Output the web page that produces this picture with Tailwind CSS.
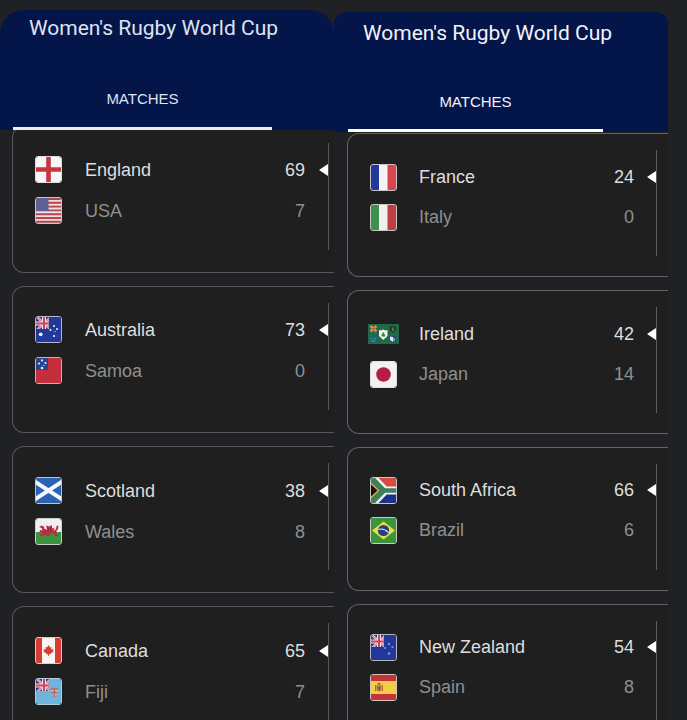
<!DOCTYPE html>
<html lang="en">
<head>
    <meta charset="UTF-8">
    <meta name="viewport" content="width=device-width, initial-scale=1.0">
    <title>Women's Rugby World Cup</title>
    <script src="https://cdn.jsdelivr.net/npm/@tailwindcss/browser@4"></script>
</head>
<body class="bg-[#202124] h-screen overflow-hidden font-['Liberation_Sans',Arial,sans-serif] text-lg text-[#dedede]">

    <!-- Shared flag parts -->
    <svg class="hidden">
        <symbol id="jack" viewBox="0 0 13 12">
            <rect width="13" height="12" fill="#2c3885"/>
            <path d="M8 6.500L0 -1M8 6.500L16 -1M8 6.500L0 14M8 6.500L14 12" stroke="#d9cfe2" stroke-width="2.400"/>
            <path d="M8 6.500L0 -1M8 6.500L16 -1M8 6.500L0 14M8 6.500L14 12" stroke="#c4506c" stroke-width=".8"/>
            <path d="M8 0V12M0 6.500H13" stroke="#eadfe8" stroke-width="4"/>
            <path d="M8 0V12M0 6.500H13" stroke="#cf4258" stroke-width="2"/>
        </symbol>
        <symbol id="arrow" viewBox="0 0 9 12">
            <path d="M0 6L9 0V12Z" fill="currentColor"/>
        </symbol>
    </svg>

    <main class="grid grid-cols-2 pr-[19px] h-full">

        <!-- Left column -->
        <section class="pt-[10px]">
            <header class="relative z-10 h-[120px] flex flex-col justify-between bg-[#041549] rounded-t-3xl text-[#dfe3f0]">
                <h1 class="pt-1 pl-[29px] text-[21px] leading-7 font-['Roboto',sans-serif] whitespace-nowrap">Women's Rugby World Cup</h1>
                <button class="ml-[13px] mr-[62px] pb-[18px] border-b-3 border-[#eceaf2] text-[15px] leading-5">MATCHES</button>
            </header>
            <div class="-mt-1 flex flex-col gap-[13px]">

                <article class="ml-3 h-[147px] pt-4 pl-[22px] pr-[5px] bg-[#1f1f1f] border border-r-0 border-[#58585a] rounded-l-xl">
                    <div class="h-[107px] pt-[6px] border-r border-[#58585a]">
                        <div class="h-[41px] flex items-center">
                            <svg class="size-[27px] rounded-[3px] border border-[#dcdcdc]" viewBox="0 0 25 25">
                                <rect width="25" height="25" fill="#f8f6f6"/>
                                <path d="M12.500 0V25M0 12.500H25" stroke="#c83540" stroke-width="4.600"/>
                            </svg>
                            <span class="ml-[23px] flex-1">England</span>
                            <span>69</span>
                            <svg class="ml-[14px] w-[9px] h-3 text-white"><use href="#arrow"/></svg>
                        </div>
                        <div class="h-[41px] flex items-center text-[#8f8f8f]">
                            <svg class="size-[27px] rounded-[3px] border border-[#cfc3c8]" viewBox="0 0 25 25">
                                <rect width="25" height="25" fill="#e9dfe2"/>
                                <path d="M0 1H25M0 4.800H25M0 8.600H25M0 12.400H25M0 16.200H25M0 20H25M0 23.800H25" stroke="#b8434f" stroke-width="1.900"/>
                                <rect width="12.500" height="13" fill="#5c6094"/>
                            </svg>
                            <span class="ml-[23px] flex-1">USA</span>
                            <span class="mr-[23px]">7</span>
                        </div>
                    </div>
                </article>

                <article class="ml-3 h-[147px] pt-4 pl-[22px] pr-[5px] bg-[#1f1f1f] border border-r-0 border-[#58585a] rounded-l-xl">
                    <div class="h-[107px] pt-[6px] border-r border-[#58585a]">
                        <div class="h-[41px] flex items-center">
                            <svg class="size-[27px] rounded-[3px] border border-[#b4b6c4]" viewBox="0 0 25 25">
                                <rect width="25" height="25" fill="#20399a"/>
                                <use href="#jack" width="13" height="12"/>
                                <g fill="#eef2ff">
                                    <circle cx="4.700" cy="17.300" r="1.900"/>
                                    <circle cx="18" cy="9" r="1"/><circle cx="14.500" cy="13" r="1"/>
                                    <circle cx="21" cy="12" r="1"/><circle cx="18" cy="19" r="1.100"/><circle cx="19" cy="14.500" r=".6"/>
                                </g>
                            </svg>
                            <span class="ml-[23px] flex-1">Australia</span>
                            <span>73</span>
                            <svg class="ml-[14px] w-[9px] h-3 text-white"><use href="#arrow"/></svg>
                        </div>
                        <div class="h-[41px] flex items-center text-[#8f8f8f]">
                            <svg class="size-[27px] rounded-[3px] border border-[#c4b4ba]" viewBox="0 0 25 25">
                                <rect width="25" height="25" fill="#c52e3b"/>
                                <rect width="12" height="12" fill="#2b4290"/>
                                <g fill="#e6ebfa">
                                    <circle cx="6" cy="2.400" r="1.100"/><circle cx="3" cy="5.500" r="1.100"/>
                                    <circle cx="9.500" cy="5" r="1.100"/><circle cx="6" cy="10" r="1.300"/><circle cx="7.800" cy="7.300" r=".6"/>
                                </g>
                            </svg>
                            <span class="ml-[23px] flex-1">Samoa</span>
                            <span class="mr-[23px]">0</span>
                        </div>
                    </div>
                </article>

                <article class="ml-3 h-[147px] pt-4 pl-[22px] pr-[5px] bg-[#1f1f1f] border border-r-0 border-[#58585a] rounded-l-xl">
                    <div class="h-[107px] pt-[7px] border-r border-[#58585a]">
                        <div class="h-[41px] flex items-center">
                            <svg class="size-[27px] rounded-[3px] border border-[#b9c4da]" viewBox="0 0 25 25">
                                <rect width="25" height="25" fill="#2b62b4"/>
                                <path d="M-2 3L27 22M27 3L-2 22" stroke="#f6f9ff" stroke-width="4"/>
                            </svg>
                            <span class="ml-[23px] flex-1">Scotland</span>
                            <span>38</span>
                            <svg class="ml-[14px] w-[9px] h-3 text-white"><use href="#arrow"/></svg>
                        </div>
                        <div class="h-[41px] flex items-center text-[#8f8f8f]">
                            <svg class="size-[27px] rounded-[3px] border border-[#c6d2c6]" viewBox="0 0 25 25">
                                <rect width="25" height="25" fill="#f1efef"/>
                                <rect y="13" width="25" height="12" fill="#3d9242"/>
                                <path d="M3 8L5.500 6.500L8 7.500L8.500 10L11 10.500L10 6.500L13 7.500L16 6L16 9.500L18.500 8.500L17.500 12L20 10L20.500 7L22.500 6.500L22 10L20 13L21.500 15.500L23 17L19.500 17L17.500 14.500L14 14.500L13.500 17L10.500 17.500L11 15.500L8 16.500L5 17.500L3.500 16L6.500 14.500L3.500 13L4 11L6.500 11.500L5.500 9Z" fill="#bd2d43"/>
                                <path d="M11.500 8L13 12M15 8L14.500 12M7 13H10" stroke="#7d2a35" stroke-width=".7"/>
                            </svg>
                            <span class="ml-[23px] flex-1">Wales</span>
                            <span class="mr-[23px]">8</span>
                        </div>
                    </div>
                </article>

                <article class="ml-3 h-[147px] pt-4 pl-[22px] pr-[5px] bg-[#1f1f1f] border border-r-0 border-[#58585a] rounded-l-xl">
                    <div class="h-[107px] pt-[7px] border-r border-[#58585a]">
                        <div class="h-[41px] flex items-center">
                            <svg class="size-[27px] rounded-[3px] border border-[#e0c8c8]" viewBox="0 0 25 25">
                                <rect width="25" height="25" fill="#f8f4f3"/>
                                <path d="M0 0H6V25H0ZM19 0H25V25H19Z" fill="#d93a32"/>
                                <path d="M12.500 7L14 9.500L15.500 9L15.200 11.500L17.500 11L17 12.800L17.700 13.500L14.500 15.500L14.500 16.300H12.900V18H12.100V16.300H10.500L10.500 15.500L7.300 13.500L8 12.800L7.500 11L9.800 11.500L9.500 9L11 9.500Z" fill="#d93a32"/>
                            </svg>
                            <span class="ml-[23px] flex-1">Canada</span>
                            <span>65</span>
                            <svg class="ml-[14px] w-[9px] h-3 text-white"><use href="#arrow"/></svg>
                        </div>
                        <div class="h-[41px] flex items-center text-[#8f8f8f]">
                            <svg class="size-[27px] rounded-[3px] border border-[#b4cbd8]" viewBox="0 0 25 25">
                                <rect width="25" height="25" fill="#6fb4dc"/>
                                <use href="#jack" width="13" height="12"/>
                                <path d="M14.500 9.500H22V13.500L18.500 18.500L15 13.500Z" fill="#cbb9b3"/>
                                <path d="M14.500 10H22M15 13.500H21.500M18.300 10V18" stroke="#b9605a" stroke-width="1.400"/>
                            </svg>
                            <span class="ml-[23px] flex-1">Fiji</span>
                            <span class="mr-[23px]">7</span>
                        </div>
                    </div>
                </article>
            </div>
        </section>

        <!-- Right column -->
        <section class="pt-3">
            <header class="h-[120px] flex flex-col justify-between bg-[#041549] rounded-t-xl text-[#f1f3fa]">
                <h1 class="pt-[7px] pl-[29px] text-[21px] leading-7 font-['Roboto',sans-serif] whitespace-nowrap">Women's Rugby World Cup</h1>
                <button class="ml-[14px] mr-[65px] pb-[17px] border-b-3 border-white text-[15px] leading-5">MATCHES</button>
            </header>
            <div class="pt-px flex flex-col gap-[13px]">

                <article class="ml-[13px] h-36 pt-4 pl-[22px] pr-[11px] bg-[#1f1f1f] border border-r-0 border-[#646464] rounded-l-xl">
                    <div class="h-[106px] pt-[7px] border-r border-[#5e5e5e]">
                        <div class="h-10 flex items-center">
                            <svg class="size-[27px] rounded-[3px] border border-[#c9c4cc]" viewBox="0 0 25 25">
                                <rect width="25" height="25" fill="#f4f2f4"/>
                                <rect width="8" height="25" fill="#24389c"/>
                                <rect x="16.500" width="8.500" height="25" fill="#d8454c"/>
                            </svg>
                            <span class="ml-[22px] flex-1">France</span>
                            <span>24</span>
                            <svg class="ml-[13px] w-[9px] h-3 text-white"><use href="#arrow"/></svg>
                        </div>
                        <div class="h-10 flex items-center text-[#8f8f8f]">
                            <svg class="size-[27px] rounded-[3px] border border-[#c9c4c4]" viewBox="0 0 25 25">
                                <rect width="25" height="25" fill="#f1efef"/>
                                <rect width="8" height="25" fill="#3c9150"/>
                                <rect x="16.500" width="8.500" height="25" fill="#bd3d43"/>
                            </svg>
                            <span class="ml-[22px] flex-1">Italy</span>
                            <span class="mr-[22px]">0</span>
                        </div>
                    </div>
                </article>

                <article class="ml-[13px] h-36 pt-4 pl-[22px] pr-[11px] bg-[#1f1f1f] border border-r-0 border-[#646464] rounded-l-xl">
                    <div class="h-[106px] pt-[7px] border-r border-[#5e5e5e]">
                        <div class="h-10 flex items-center">
                            <div class="w-[27px] flex justify-center">
                                <svg class="w-[31px] h-5 shrink-0" viewBox="0 0 31 20">
                                    <rect width="31" height="20" fill="#1f6a4b"/>
                                    <path d="M2.500 2L8.500 7.500M8.500 2L2.500 7.500" stroke="#e08a4c" stroke-width="2.400"/>
                                    <circle cx="5.500" cy="4.800" r="1" fill="#a8452f"/>
                                    <path d="M21.500 2H28V6L25 9L21.500 6Z" fill="#17422a"/>
                                    <path d="M25 3.500V7" stroke="#a58a35" stroke-width="1.200"/>
                                    <path d="M11 6L13 6.500L15 5.500L17.500 6.500L19.500 6V12L15.300 16L11 12Z" fill="#f0f4ef"/>
                                    <path d="M13.500 11.500H17.200M15.300 8.500V11" stroke="#397a54" stroke-width="1.800"/>
                                    <path d="M2.500 14.500H4.500M6 14.500H8M3 17H7.500" stroke="#3a7fc4" stroke-width="1.500"/>
                                    <path d="M21.500 12H28V16L25 19L21.500 16Z" fill="#27458d"/>
                                    <path d="M22 12.500L25 13V18L22 16Z" fill="#dfe7ef"/>
                                    <path d="M26 14V17" stroke="#dfe7ef"/>
                                </svg>
                            </div>
                            <span class="ml-[22px] flex-1">Ireland</span>
                            <span>42</span>
                            <svg class="ml-[13px] w-[9px] h-3 text-white"><use href="#arrow"/></svg>
                        </div>
                        <div class="h-10 flex items-center text-[#8f8f8f]">
                            <svg class="size-[27px] rounded-[3px] border border-[#e4e0e2]" viewBox="0 0 25 25">
                                <rect width="25" height="25" fill="#f3f0f1"/>
                                <circle cx="12.500" cy="12.500" r="7.300" fill="#b3203f"/>
                            </svg>
                            <span class="ml-[22px] flex-1">Japan</span>
                            <span class="mr-[22px]">14</span>
                        </div>
                    </div>
                </article>

                <article class="ml-[13px] h-36 pt-4 pl-[22px] pr-[11px] bg-[#1f1f1f] border border-r-0 border-[#646464] rounded-l-xl">
                    <div class="h-[106px] pt-[6px] border-r border-[#5e5e5e]">
                        <div class="h-10 flex items-center">
                            <svg class="size-[27px] rounded-[3px] border border-[#c4c6cc]" viewBox="0 0 25 25">
                                <rect width="25" height="12.500" fill="#da4a42"/>
                                <rect y="12.500" width="25" height="12.500" fill="#1d2f90"/>
                                <path d="M1 -1L14 12.500L1 26M13 12.500H25" stroke="#f2f4f2" stroke-width="8" fill="none"/>
                                <path d="M0 0L13 12.500L0 25Z" fill="#3f7f5e"/>
                                <path d="M0 -1L13 12.500L0 26M12 12.500H25" stroke="#3f7f5e" stroke-width="4.600" fill="none"/>
                                <path d="M0 4.500L8.300 12.500L0 20.500Z" fill="#e9b03c"/>
                                <path d="M0 6.500L6.500 12.500L0 18.500Z" fill="#111"/>
                            </svg>
                            <span class="ml-[22px] flex-1">South Africa</span>
                            <span>66</span>
                            <svg class="ml-[13px] w-[9px] h-3 text-white"><use href="#arrow"/></svg>
                        </div>
                        <div class="h-10 flex items-center text-[#8f8f8f]">
                            <svg class="size-[27px] rounded-[3px] border border-[#c2d0c2]" viewBox="0 0 25 25">
                                <rect width="25" height="25" fill="#3a9440"/>
                                <path d="M12.500 3.500L24 12.500L12.500 21.500L1 12.500Z" fill="#f0dc3c"/>
                                <circle cx="12.500" cy="12.500" r="5.600" fill="#23407f"/>
                                <path d="M7.300 11.300Q13 10 17.500 14.500" stroke="#dfe8ee" stroke-width="1.200" fill="none"/>
                            </svg>
                            <span class="ml-[22px] flex-1">Brazil</span>
                            <span class="mr-[22px]">6</span>
                        </div>
                    </div>
                </article>

                <article class="ml-[13px] h-36 pt-4 pl-[22px] pr-[11px] bg-[#1f1f1f] border border-r-0 border-[#646464] rounded-l-xl">
                    <div class="h-[106px] pt-[6px] border-r border-[#5e5e5e]">
                        <div class="h-10 flex items-center">
                            <svg class="size-[27px] rounded-[3px] border border-[#b4b6c4]" viewBox="0 0 25 25">
                                <rect width="25" height="25" fill="#20399a"/>
                                <use href="#jack" width="13" height="12"/>
                                <g fill="#8f8fc8">
                                    <circle cx="18" cy="9" r="1.200"/><circle cx="14" cy="13" r="1.100"/>
                                    <circle cx="21.500" cy="12" r="1.100"/><circle cx="18" cy="18.500" r="1.300"/>
                                </g>
                            </svg>
                            <span class="ml-[22px] flex-1">New Zealand</span>
                            <span>54</span>
                            <svg class="ml-[13px] w-[9px] h-3 text-white"><use href="#arrow"/></svg>
                        </div>
                        <div class="h-10 flex items-center text-[#8f8f8f]">
                            <svg class="size-[27px] rounded-[3px] border border-[#d4c4b8]" viewBox="0 0 25 25">
                                <rect width="25" height="25" fill="#c4323a"/>
                                <rect y="6" width="25" height="13" fill="#f4cd43"/>
                                <path d="M4 10H5.500V16H4ZM10.500 10H12V16H10.500ZM6 10.500H10V15L8 17L6 15ZM6.500 8H9.500V10H6.500Z" fill="#a4713c"/>
                                <path d="M7 12H9V14.500H7Z" fill="#b5484a"/>
                            </svg>
                            <span class="ml-[22px] flex-1">Spain</span>
                            <span class="mr-[22px]">8</span>
                        </div>
                    </div>
                </article>
            </div>
        </section>
    </main>
</body>
</html>
